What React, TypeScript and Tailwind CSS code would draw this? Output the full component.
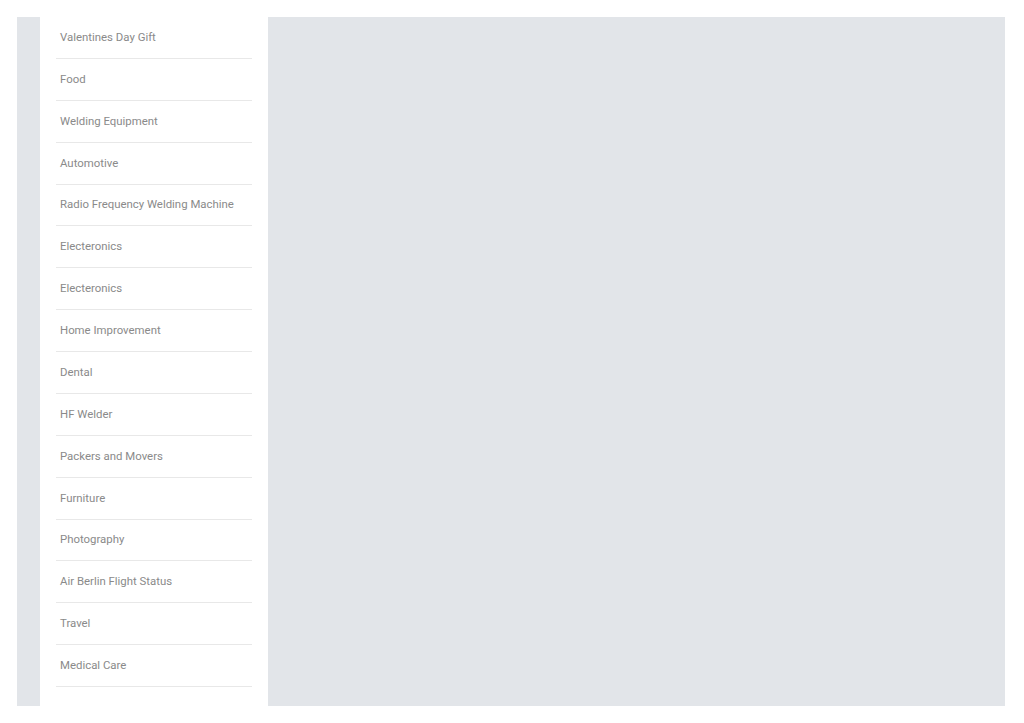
const items = [
  "Valentines Day Gift",
  "Food",
  "Welding Equipment",
  "Automotive",
  "Radio Frequency Welding Machine",
  "Electeronics",
  "Electeronics",
  "Home Improvement",
  "Dental",
  "HF Welder",
  "Packers and Movers",
  "Furniture",
  "Photography",
  "Air Berlin Flight Status",
  "Travel",
  "Medical Care",
];

export default function App() {
  return (
    <div className="bg-white pt-[17px] pb-[17px] pl-[17px] pr-[19px] font-['Roboto',sans-serif]">
      <div className="flex bg-[#e2e5e9] pl-[23px] h-[689px]">
        <aside className="w-[228px] bg-white px-4">
          <ul>
            {items.map((item, i) => (
              <li
                key={i}
                className="h-[41.875px] flex items-center pl-1 border-b border-[#e8e8e8] text-[11.4px] text-[#8a8a8a] whitespace-nowrap"
              >
                {item}
              </li>
            ))}
          </ul>
        </aside>
        <main className="flex-1" />
      </div>
    </div>
  );
}
